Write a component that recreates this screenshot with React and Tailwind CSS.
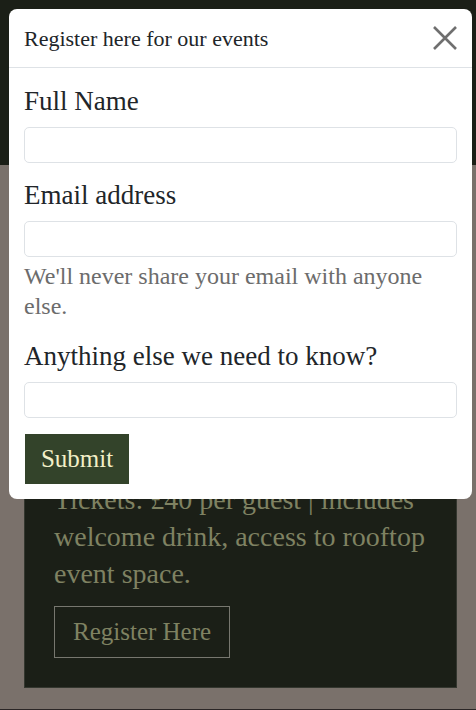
import React from "react";

const serif = { fontFamily: '"Liberation Serif", "DejaVu Serif", serif' };

const Field = ({ label, children, className = "" }) => (
  <div className={className}>
    <label className="block text-[27px] leading-[36px] mb-[8px] text-[#212529]">
      {label}
    </label>
    <input
      type="text"
      className="block w-full h-[36px] rounded-[5px] border border-[#dee2e6] bg-white px-3 focus:outline-none"
    />
    {children}
  </div>
);

const App = () => {
  return (
    <div className="relative w-[476px] h-[710px] overflow-hidden bg-[#7a716b]" style={serif}>
      {/* page behind the modal */}
      <div className="h-[165px] bg-[#1b1f17]" />
      <div className="pl-[24px] pr-[19px] pt-[20px] pb-[21px]">
        <div className="bg-[#1b1f17] border border-[#34372f] pt-[295px] pb-[29px] pl-[29px] pr-[10px]">
          <p className="text-[28px] leading-[37px] text-[#7f8262] mb-[14px]">
            Tickets: £40 per guest | includes
            <br />
            welcome drink, access to rooftop
            <br />
            event space.
          </p>
          <button className="h-[52px] px-[18px] border border-[#77776f] text-[25px] text-[#7f8262]">
            Register Here
          </button>
        </div>
      </div>
      <div className="h-[10px] bg-[#2b2626]" />

      {/* modal */}
      <div className="absolute left-[9px] top-[9px] w-[463px] rounded-[8px] bg-white">
        <div className="h-[59px] flex items-center justify-between px-[15px] border-b border-[#dee2e6]">
          <h5 className="text-[22px] text-[#212529]">Register here for our events</h5>
          <button aria-label="Close" className="w-[24px] h-[24px]">
            <svg viewBox="0 0 24 24" width="24" height="24">
              <path d="M1 1L23 23M23 1L1 23" stroke="#6f6f6f" strokeWidth="2.6" fill="none" />
            </svg>
          </button>
        </div>
        <div className="px-[15px] pt-[15px] pb-[15px]">
          <Field label="Full Name" className="mb-[14px]" />
          <Field label="Email address" className="mb-[17px]">
            <div className="mt-[4px] text-[24px] leading-[30px] text-[#6c6c6c]">
              We'll never share your email with anyone else.
            </div>
          </Field>
          <Field label="Anything else we need to know?" className="mb-[16px]" />
          <button className="ml-px h-[50px] w-[104px] bg-[#33432a] text-[25px] text-[#f2f0c8]">
            Submit
          </button>
        </div>
      </div>
    </div>
  );
};

export default App;
